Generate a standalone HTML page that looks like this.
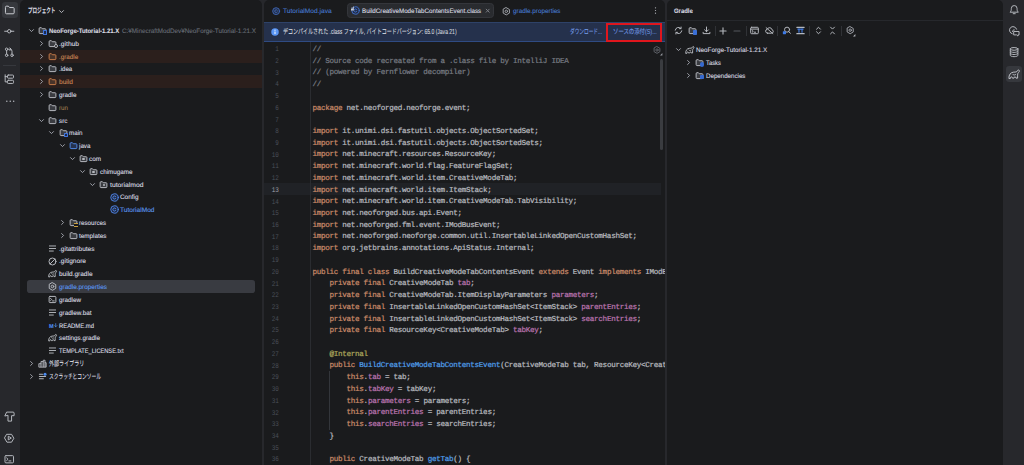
<!DOCTYPE html>
<html lang="ja"><head><meta charset="utf-8"><title>IntelliJ IDEA</title><style>
html,body{margin:0;padding:0;}
body{width:1024px;height:465px;overflow:hidden;background:#27282c;position:relative;font-family:"Liberation Sans",sans-serif;text-rendering:geometricPrecision;}
.b{position:absolute;}
.i{position:absolute;overflow:visible;}
.t{position:absolute;white-space:pre;font-family:"Liberation Sans","Noto Sans CJK JP",sans-serif;transform-origin:0 50%;-webkit-text-stroke-width:0.1px;}
.code,.ln{position:absolute;font-family:"Liberation Mono",monospace;overflow:hidden;-webkit-text-stroke-width:0.22px;}
.ln{-webkit-text-stroke-width:0;}
.ln{text-align:right;}
.cl{height:11.734px;white-space:pre;}
</style></head>
<body>
<div class="b" style="left:1.90px;top:1.90px;width:15.70px;height:15.70px;background:#36383d;border-radius:3.2px;"></div>
<svg class="i" style="left:3.60px;top:3.90px;" width="11.6" height="11.6" viewBox="0 0 16 16"><path fill="none" stroke="#caccd2" stroke-width="1.00" vector-effect="non-scaling-stroke" stroke-linecap="round" stroke-linejoin="round" style="fill:#3b3d42" d="M2 4.3a1.3 1.3 0 0 1 1.3-1.3h2.7l1.7 1.9h5a1.3 1.3 0 0 1 1.3 1.3v6a1.3 1.3 0 0 1-1.3 1.3H3.3a1.3 1.3 0 0 1-1.3-1.3z"/></svg>
<svg class="i" style="left:4.25px;top:25.75px;" width="10.5" height="10.5" viewBox="0 0 16 16"><circle fill="none" stroke="#b4b7bd" stroke-width="1.00" vector-effect="non-scaling-stroke" stroke-linecap="round" stroke-linejoin="round" cx="8" cy="8" r="2.6"/><path fill="none" stroke="#b4b7bd" stroke-width="1.00" vector-effect="non-scaling-stroke" stroke-linecap="round" stroke-linejoin="round" d="M1 8h4.4M10.6 8H15"/></svg>
<svg class="i" style="left:4.25px;top:47.15px;" width="10.5" height="10.5" viewBox="0 0 16 16"><circle fill="none" stroke="#b4b7bd" stroke-width="1.00" vector-effect="non-scaling-stroke" stroke-linecap="round" stroke-linejoin="round" cx="4" cy="12.6" r="1.9"/><circle fill="none" stroke="#b4b7bd" stroke-width="1.00" vector-effect="non-scaling-stroke" stroke-linecap="round" stroke-linejoin="round" cx="12.2" cy="12.6" r="1.9"/><circle fill="none" stroke="#b4b7bd" stroke-width="1.00" vector-effect="non-scaling-stroke" stroke-linecap="round" stroke-linejoin="round" cx="4" cy="3.4" r="1.9"/><path fill="none" stroke="#b4b7bd" stroke-width="1.00" vector-effect="non-scaling-stroke" stroke-linecap="round" stroke-linejoin="round" d="M4 5.3v5.4M12.2 10.7V6.400a3 3 0 0 0-3-3H7.200M9 1.400l2 2-2 2"/></svg>
<div class="b" style="left:3.20px;top:65.20px;width:12.40px;height:0.80px;background:#36383d;border-radius:0px;"></div>
<svg class="i" style="left:4.25px;top:74.25px;" width="10.5" height="10.5" viewBox="0 0 16 16"><rect fill="none" stroke="#b4b7bd" stroke-width="1.00" vector-effect="non-scaling-stroke" stroke-linecap="round" stroke-linejoin="round" x="5.200" y="1.600" width="9.300" height="4.800" rx="1.300"/><rect fill="none" stroke="#b4b7bd" stroke-width="1.00" vector-effect="non-scaling-stroke" stroke-linecap="round" stroke-linejoin="round" x="5.200" y="9.600" width="9.300" height="4.800" rx="1.300"/><path fill="none" stroke="#b4b7bd" stroke-width="1.00" vector-effect="non-scaling-stroke" stroke-linecap="round" stroke-linejoin="round" d="M1.800 1.200V12h3.400M1.800 4h3.400"/></svg>
<svg class="i" style="left:4.55px;top:95.65px;" width="10.5" height="10.5" viewBox="0 0 16 16"><circle fill="#b4b7bd" cx="2.800" cy="8" r="1.15"/><circle fill="#b4b7bd" cx="8" cy="8" r="1.15"/><circle fill="#b4b7bd" cx="13.200" cy="8" r="1.15"/></svg>
<svg class="i" style="left:4.20px;top:410.70px;" width="11" height="11" viewBox="0 0 16 16"><path fill="none" stroke="#b4b7bd" stroke-width="1.00" vector-effect="non-scaling-stroke" stroke-linecap="round" stroke-linejoin="round" d="M1.400 6.800 3.800 1.600H13.200Q14.700 1.600 14.700 3.100V6.800H11V14.700H5.800V6.800Z"/></svg>
<svg class="i" style="left:4.25px;top:432.65px;" width="10.5" height="10.5" viewBox="0 0 16 16"><path fill="none" stroke="#b4b7bd" stroke-width="1.00" vector-effect="non-scaling-stroke" stroke-linecap="round" stroke-linejoin="round" d="M4.500 2h7L15 8l-3.500 6h-7L1 8z"/><path fill="none" stroke="#b4b7bd" stroke-width="1.00" vector-effect="non-scaling-stroke" stroke-linecap="round" stroke-linejoin="round" d="M6.500 5.500v5L10.700 8z"/></svg>
<svg class="i" style="left:4.25px;top:453.65px;" width="10.5" height="10.5" viewBox="0 0 16 16"><rect fill="none" stroke="#b4b7bd" stroke-width="1.00" vector-effect="non-scaling-stroke" stroke-linecap="round" stroke-linejoin="round" x="1.500" y="2.500" width="13" height="11" rx="1.500"/><path fill="none" stroke="#b4b7bd" stroke-width="1.00" vector-effect="non-scaling-stroke" stroke-linecap="round" stroke-linejoin="round" d="M4 6l2.200 2L4 10M7.500 10.500h3"/></svg>
<div class="b" style="left:20px;top:0;width:241.60000000000002px;height:475px;background:#1a1b1d;border-radius:5px 5px 0 0;overflow:hidden">
</div>
<span class="t" style="left:27.50px;top:5.10px;font-size:7.2px;line-height:12px;color:#dadce1;font-weight:bold;transform:scaleX(0.632);">プロジェクト</span>
<svg class="i" style="left:57.70px;top:7.70px;" width="7" height="7" viewBox="0 0 16 16"><path fill="none" stroke="#b4b7bd" stroke-width="1.00" vector-effect="non-scaling-stroke" stroke-linecap="round" stroke-linejoin="round" d="M3.5 6 8 10.5 12.5 6"/></svg>
<div class="b" style="left:20.00px;top:49.72px;width:241.60px;height:12.81px;background:#2b1f1c;border-radius:0px;"></div>
<div class="b" style="left:20.00px;top:75.34px;width:241.60px;height:12.81px;background:#2b1f1c;border-radius:0px;"></div>
<div class="b" style="left:27.30px;top:280.30px;width:227.70px;height:12.81px;background:#393b41;border-radius:2.8px;"></div>
<svg class="i" style="left:27.90px;top:27.00px;" width="7" height="7" viewBox="0 0 16 16"><path fill="none" stroke="#9da0a8" stroke-width="1.00" vector-effect="non-scaling-stroke" stroke-linecap="round" stroke-linejoin="round" d="M3.5 6 8 10.5 12.5 6"/></svg>
<svg class="i" style="left:38.10px;top:26.00px;" width="9" height="9" viewBox="0 0 16 16"><path fill="none" stroke="#b4b7bd" stroke-width="1.00" vector-effect="non-scaling-stroke" stroke-linecap="round" stroke-linejoin="round" style="fill:#3a3c41" d="M2 4.3a1.3 1.3 0 0 1 1.3-1.3h2.7l1.7 1.9h5a1.3 1.3 0 0 1 1.3 1.3v6a1.3 1.3 0 0 1-1.3 1.3H3.3a1.3 1.3 0 0 1-1.3-1.3z"/></svg>
<div class="b" style="left:43.40px;top:30.40px;width:3.8px;height:4.5px;background:#1d2b4a;border:1px solid #3f74dd;border-radius:0.5px;box-sizing:border-box"></div>
<span id="t0" class="t " style="left:48.50px;top:25.90px;font-size:6.5px;color:#dadce1;line-height:12px;font-weight:bold;transform:scaleX(0.9139);">NeoForge-Tutorial-1.21.X</span>
<svg class="i" style="left:38.10px;top:39.81px;" width="7" height="7" viewBox="0 0 16 16"><path fill="none" stroke="#9da0a8" stroke-width="1.00" vector-effect="non-scaling-stroke" stroke-linecap="round" stroke-linejoin="round" d="M6 3.5 10.5 8 6 12.5"/></svg>
<svg class="i" style="left:48.30px;top:38.81px;" width="9" height="9" viewBox="0 0 16 16"><path fill="none" stroke="#b4b7bd" stroke-width="1.00" vector-effect="non-scaling-stroke" stroke-linecap="round" stroke-linejoin="round" style="fill:#3a3c41" d="M2 4.3a1.3 1.3 0 0 1 1.3-1.3h2.7l1.7 1.9h5a1.3 1.3 0 0 1 1.3 1.3v6a1.3 1.3 0 0 1-1.3 1.3H3.3a1.3 1.3 0 0 1-1.3-1.3z"/></svg>
<div class="b" style="left:53.60px;top:43.61px;width:4.2px;height:4.200px;background:#1a1b1d;border:1px solid #b4b7bd;border-radius:2.5px;box-sizing:border-box"></div>
<span id="t1" class="t " style="left:58.70px;top:38.71px;font-size:6.5px;color:#dadce1;line-height:12px;transform:scaleX(1.0240);">.github</span>
<svg class="i" style="left:38.10px;top:52.62px;" width="7" height="7" viewBox="0 0 16 16"><path fill="none" stroke="#9da0a8" stroke-width="1.00" vector-effect="non-scaling-stroke" stroke-linecap="round" stroke-linejoin="round" d="M6 3.5 10.5 8 6 12.5"/></svg>
<svg class="i" style="left:48.30px;top:51.62px;" width="9" height="9" viewBox="0 0 16 16"><path fill="none" stroke="#c57a48" stroke-width="1.00" vector-effect="non-scaling-stroke" stroke-linecap="round" stroke-linejoin="round" style="fill:#48342a" d="M2 4.3a1.3 1.3 0 0 1 1.3-1.3h2.7l1.7 1.9h5a1.3 1.3 0 0 1 1.3 1.3v6a1.3 1.3 0 0 1-1.3 1.3H3.3a1.3 1.3 0 0 1-1.3-1.3z"/></svg>
<span id="t2" class="t " style="left:58.70px;top:51.52px;font-size:6.5px;color:#c98556;line-height:12px;transform:scaleX(0.9660);">.gradle</span>
<svg class="i" style="left:38.10px;top:65.43px;" width="7" height="7" viewBox="0 0 16 16"><path fill="none" stroke="#9da0a8" stroke-width="1.00" vector-effect="non-scaling-stroke" stroke-linecap="round" stroke-linejoin="round" d="M6 3.5 10.5 8 6 12.5"/></svg>
<svg class="i" style="left:48.30px;top:64.43px;" width="9" height="9" viewBox="0 0 16 16"><path fill="none" stroke="#b4b7bd" stroke-width="1.00" vector-effect="non-scaling-stroke" stroke-linecap="round" stroke-linejoin="round" style="fill:#3a3c41" d="M2 4.3a1.3 1.3 0 0 1 1.3-1.3h2.7l1.7 1.9h5a1.3 1.3 0 0 1 1.3 1.3v6a1.3 1.3 0 0 1-1.3 1.3H3.3a1.3 1.3 0 0 1-1.3-1.3z"/></svg>
<span id="t3" class="t " style="left:58.70px;top:64.33px;font-size:6.5px;color:#dadce1;line-height:12px;transform:scaleX(0.9355);">.idea</span>
<svg class="i" style="left:38.10px;top:78.24px;" width="7" height="7" viewBox="0 0 16 16"><path fill="none" stroke="#9da0a8" stroke-width="1.00" vector-effect="non-scaling-stroke" stroke-linecap="round" stroke-linejoin="round" d="M6 3.5 10.5 8 6 12.5"/></svg>
<svg class="i" style="left:48.30px;top:77.24px;" width="9" height="9" viewBox="0 0 16 16"><path fill="none" stroke="#c57a48" stroke-width="1.00" vector-effect="non-scaling-stroke" stroke-linecap="round" stroke-linejoin="round" style="fill:#48342a" d="M2 4.3a1.3 1.3 0 0 1 1.3-1.3h2.7l1.7 1.9h5a1.3 1.3 0 0 1 1.3 1.3v6a1.3 1.3 0 0 1-1.3 1.3H3.3a1.3 1.3 0 0 1-1.3-1.3z"/></svg>
<span id="t4" class="t " style="left:58.70px;top:77.14px;font-size:6.5px;color:#c98556;line-height:12px;transform:scaleX(1.0193);">build</span>
<svg class="i" style="left:38.10px;top:91.05px;" width="7" height="7" viewBox="0 0 16 16"><path fill="none" stroke="#9da0a8" stroke-width="1.00" vector-effect="non-scaling-stroke" stroke-linecap="round" stroke-linejoin="round" d="M6 3.5 10.5 8 6 12.5"/></svg>
<svg class="i" style="left:48.30px;top:90.05px;" width="9" height="9" viewBox="0 0 16 16"><path fill="none" stroke="#b4b7bd" stroke-width="1.00" vector-effect="non-scaling-stroke" stroke-linecap="round" stroke-linejoin="round" style="fill:#3a3c41" d="M2 4.3a1.3 1.3 0 0 1 1.3-1.3h2.7l1.7 1.9h5a1.3 1.3 0 0 1 1.3 1.3v6a1.3 1.3 0 0 1-1.3 1.3H3.3a1.3 1.3 0 0 1-1.3-1.3z"/></svg>
<span id="t5" class="t " style="left:58.70px;top:89.95px;font-size:6.5px;color:#dadce1;line-height:12px;transform:scaleX(0.9680);">gradle</span>
<svg class="i" style="left:48.30px;top:102.86px;" width="9" height="9" viewBox="0 0 16 16"><path fill="none" stroke="#b4b7bd" stroke-width="1.00" vector-effect="non-scaling-stroke" stroke-linecap="round" stroke-linejoin="round" style="fill:#3a3c41" d="M2 4.3a1.3 1.3 0 0 1 1.3-1.3h2.7l1.7 1.9h5a1.3 1.3 0 0 1 1.3 1.3v6a1.3 1.3 0 0 1-1.3 1.3H3.3a1.3 1.3 0 0 1-1.3-1.3z"/></svg>
<span id="t6" class="t " style="left:58.70px;top:102.76px;font-size:6.5px;color:#9c7c4e;line-height:12px;transform:scaleX(0.9568);">run</span>
<svg class="i" style="left:38.10px;top:116.67px;" width="7" height="7" viewBox="0 0 16 16"><path fill="none" stroke="#9da0a8" stroke-width="1.00" vector-effect="non-scaling-stroke" stroke-linecap="round" stroke-linejoin="round" d="M3.5 6 8 10.5 12.5 6"/></svg>
<svg class="i" style="left:48.30px;top:115.67px;" width="9" height="9" viewBox="0 0 16 16"><path fill="none" stroke="#b4b7bd" stroke-width="1.00" vector-effect="non-scaling-stroke" stroke-linecap="round" stroke-linejoin="round" style="fill:#3a3c41" d="M2 4.3a1.3 1.3 0 0 1 1.3-1.3h2.7l1.7 1.9h5a1.3 1.3 0 0 1 1.3 1.3v6a1.3 1.3 0 0 1-1.3 1.3H3.3a1.3 1.3 0 0 1-1.3-1.3z"/></svg>
<span id="t7" class="t " style="left:58.70px;top:115.57px;font-size:6.5px;color:#dadce1;line-height:12px;transform:scaleX(0.9802);">src</span>
<svg class="i" style="left:48.30px;top:129.48px;" width="7" height="7" viewBox="0 0 16 16"><path fill="none" stroke="#9da0a8" stroke-width="1.00" vector-effect="non-scaling-stroke" stroke-linecap="round" stroke-linejoin="round" d="M3.5 6 8 10.5 12.5 6"/></svg>
<svg class="i" style="left:58.50px;top:128.48px;" width="9" height="9" viewBox="0 0 16 16"><path fill="none" stroke="#b4b7bd" stroke-width="1.00" vector-effect="non-scaling-stroke" stroke-linecap="round" stroke-linejoin="round" style="fill:#3a3c41" d="M2 4.3a1.3 1.3 0 0 1 1.3-1.3h2.7l1.7 1.9h5a1.3 1.3 0 0 1 1.3 1.3v6a1.3 1.3 0 0 1-1.3 1.3H3.3a1.3 1.3 0 0 1-1.3-1.3z"/></svg>
<div class="b" style="left:63.80px;top:132.88px;width:3.8px;height:4.5px;background:#1d2b4a;border:1px solid #3f74dd;border-radius:0.5px;box-sizing:border-box"></div>
<span id="t8" class="t " style="left:68.90px;top:128.38px;font-size:6.5px;color:#dadce1;line-height:12px;transform:scaleX(0.9579);">main</span>
<svg class="i" style="left:58.50px;top:142.29px;" width="7" height="7" viewBox="0 0 16 16"><path fill="none" stroke="#9da0a8" stroke-width="1.00" vector-effect="non-scaling-stroke" stroke-linecap="round" stroke-linejoin="round" d="M3.5 6 8 10.5 12.5 6"/></svg>
<svg class="i" style="left:68.70px;top:141.29px;" width="9" height="9" viewBox="0 0 16 16"><path fill="none" stroke="#4f86e0" stroke-width="1.00" vector-effect="non-scaling-stroke" stroke-linecap="round" stroke-linejoin="round" style="fill:#25324d" d="M2 4.3a1.3 1.3 0 0 1 1.3-1.3h2.7l1.7 1.9h5a1.3 1.3 0 0 1 1.3 1.3v6a1.3 1.3 0 0 1-1.3 1.3H3.3a1.3 1.3 0 0 1-1.3-1.3z"/></svg>
<span id="t9" class="t " style="left:79.10px;top:141.19px;font-size:6.5px;color:#dadce1;line-height:12px;transform:scaleX(0.9634);">java</span>
<svg class="i" style="left:68.70px;top:155.10px;" width="7" height="7" viewBox="0 0 16 16"><path fill="none" stroke="#9da0a8" stroke-width="1.00" vector-effect="non-scaling-stroke" stroke-linecap="round" stroke-linejoin="round" d="M3.5 6 8 10.5 12.5 6"/></svg>
<svg class="i" style="left:78.90px;top:154.10px;" width="9" height="9" viewBox="0 0 16 16"><path fill="none" stroke="#b4b7bd" stroke-width="1.00" vector-effect="non-scaling-stroke" stroke-linecap="round" stroke-linejoin="round" style="fill:#3a3c41" d="M2 4.3a1.3 1.3 0 0 1 1.3-1.3h2.7l1.7 1.9h5a1.3 1.3 0 0 1 1.3 1.3v6a1.3 1.3 0 0 1-1.3 1.3H3.3a1.3 1.3 0 0 1-1.3-1.3z"/></svg>
<div class="b" style="left:82.20px;top:158.00px;width:2.400px;height:2.400px;background:#b4b7bd;border-radius:1.2px"></div>
<span id="t10" class="t " style="left:89.30px;top:154.00px;font-size:6.5px;color:#dadce1;line-height:12px;transform:scaleX(0.9771);">com</span>
<svg class="i" style="left:78.90px;top:167.91px;" width="7" height="7" viewBox="0 0 16 16"><path fill="none" stroke="#9da0a8" stroke-width="1.00" vector-effect="non-scaling-stroke" stroke-linecap="round" stroke-linejoin="round" d="M3.5 6 8 10.5 12.5 6"/></svg>
<svg class="i" style="left:89.10px;top:166.91px;" width="9" height="9" viewBox="0 0 16 16"><path fill="none" stroke="#b4b7bd" stroke-width="1.00" vector-effect="non-scaling-stroke" stroke-linecap="round" stroke-linejoin="round" style="fill:#3a3c41" d="M2 4.3a1.3 1.3 0 0 1 1.3-1.3h2.7l1.7 1.9h5a1.3 1.3 0 0 1 1.3 1.3v6a1.3 1.3 0 0 1-1.3 1.3H3.3a1.3 1.3 0 0 1-1.3-1.3z"/></svg>
<div class="b" style="left:92.40px;top:170.81px;width:2.400px;height:2.400px;background:#b4b7bd;border-radius:1.2px"></div>
<span id="t11" class="t " style="left:99.50px;top:166.81px;font-size:6.5px;color:#dadce1;line-height:12px;transform:scaleX(0.9670);">chimugame</span>
<svg class="i" style="left:89.10px;top:180.72px;" width="7" height="7" viewBox="0 0 16 16"><path fill="none" stroke="#9da0a8" stroke-width="1.00" vector-effect="non-scaling-stroke" stroke-linecap="round" stroke-linejoin="round" d="M3.5 6 8 10.5 12.5 6"/></svg>
<svg class="i" style="left:99.30px;top:179.72px;" width="9" height="9" viewBox="0 0 16 16"><path fill="none" stroke="#b4b7bd" stroke-width="1.00" vector-effect="non-scaling-stroke" stroke-linecap="round" stroke-linejoin="round" style="fill:#3a3c41" d="M2 4.3a1.3 1.3 0 0 1 1.3-1.3h2.7l1.7 1.9h5a1.3 1.3 0 0 1 1.3 1.3v6a1.3 1.3 0 0 1-1.3 1.3H3.3a1.3 1.3 0 0 1-1.3-1.3z"/></svg>
<div class="b" style="left:102.60px;top:183.62px;width:2.400px;height:2.400px;background:#b4b7bd;border-radius:1.2px"></div>
<span id="t12" class="t " style="left:109.70px;top:179.62px;font-size:6.5px;color:#dadce1;line-height:12px;transform:scaleX(1.0418);">tutorialmod</span>
<svg class="i" style="left:109.50px;top:192.53px;" width="9" height="9" viewBox="0 0 16 16"><circle fill="none" stroke="#4f86ea" stroke-width="0.90" vector-effect="non-scaling-stroke" stroke-linecap="round" stroke-linejoin="round" cx="8" cy="8" r="6.700" style="fill:#232f49"/><path fill="none" stroke="#4f86ea" stroke-width="0.90" vector-effect="non-scaling-stroke" stroke-linecap="round" stroke-linejoin="round" d="M10.100 6.300A2.700 2.700 0 1 0 10.100 9.700"/></svg>
<span id="t13" class="t " style="left:119.90px;top:192.43px;font-size:6.5px;color:#dadce1;line-height:12px;transform:scaleX(0.9842);">Config</span>
<svg class="i" style="left:109.50px;top:205.34px;" width="9" height="9" viewBox="0 0 16 16"><circle fill="none" stroke="#4f86ea" stroke-width="0.90" vector-effect="non-scaling-stroke" stroke-linecap="round" stroke-linejoin="round" cx="8" cy="8" r="6.700" style="fill:#232f49"/><path fill="none" stroke="#4f86ea" stroke-width="0.90" vector-effect="non-scaling-stroke" stroke-linecap="round" stroke-linejoin="round" d="M10.100 6.300A2.700 2.700 0 1 0 10.100 9.700"/></svg>
<span id="t14" class="t " style="left:119.90px;top:205.24px;font-size:6.5px;color:#5c97ee;line-height:12px;transform:scaleX(1.0124);">TutorialMod</span>
<svg class="i" style="left:58.50px;top:219.15px;" width="7" height="7" viewBox="0 0 16 16"><path fill="none" stroke="#9da0a8" stroke-width="1.00" vector-effect="non-scaling-stroke" stroke-linecap="round" stroke-linejoin="round" d="M6 3.5 10.5 8 6 12.5"/></svg>
<svg class="i" style="left:68.70px;top:218.15px;" width="9" height="9" viewBox="0 0 16 16"><path fill="none" stroke="#b4b7bd" stroke-width="1.00" vector-effect="non-scaling-stroke" stroke-linecap="round" stroke-linejoin="round" style="fill:#3a3c41" d="M2 4.3a1.3 1.3 0 0 1 1.3-1.3h2.7l1.7 1.9h5a1.3 1.3 0 0 1 1.3 1.3v6a1.3 1.3 0 0 1-1.3 1.3H3.3a1.3 1.3 0 0 1-1.3-1.3z"/></svg>
<div class="b" style="left:73.70px;top:223.15px;width:4.500px;height:3.5px;background:#1a1b1d;border-top:1px solid #c9a040;border-bottom:1px solid #c9a040;box-sizing:border-box"></div>
<span id="t15" class="t " style="left:79.10px;top:218.05px;font-size:6.5px;color:#dadce1;line-height:12px;transform:scaleX(0.9458);">resources</span>
<svg class="i" style="left:58.50px;top:231.96px;" width="7" height="7" viewBox="0 0 16 16"><path fill="none" stroke="#9da0a8" stroke-width="1.00" vector-effect="non-scaling-stroke" stroke-linecap="round" stroke-linejoin="round" d="M6 3.5 10.5 8 6 12.5"/></svg>
<svg class="i" style="left:68.70px;top:230.96px;" width="9" height="9" viewBox="0 0 16 16"><path fill="none" stroke="#b4b7bd" stroke-width="1.00" vector-effect="non-scaling-stroke" stroke-linecap="round" stroke-linejoin="round" style="fill:#3a3c41" d="M2 4.3a1.3 1.3 0 0 1 1.3-1.3h2.7l1.7 1.9h5a1.3 1.3 0 0 1 1.3 1.3v6a1.3 1.3 0 0 1-1.3 1.3H3.3a1.3 1.3 0 0 1-1.3-1.3z"/></svg>
<span id="t16" class="t " style="left:79.10px;top:230.86px;font-size:6.5px;color:#dadce1;line-height:12px;transform:scaleX(0.9756);">templates</span>
<svg class="i" style="left:48.30px;top:243.77px;" width="9" height="9" viewBox="0 0 16 16"><path fill="none" stroke="#b4b7bd" stroke-width="0.95" vector-effect="non-scaling-stroke" stroke-linecap="round" stroke-linejoin="round" d="M2.500 3.500h11M2.500 8h11M2.500 12.500h7"/></svg>
<span id="t17" class="t " style="left:58.70px;top:243.67px;font-size:6.5px;color:#dadce1;line-height:12px;transform:scaleX(1.0022);">.gitattributes</span>
<svg class="i" style="left:48.30px;top:256.58px;" width="9" height="9" viewBox="0 0 16 16"><circle fill="none" stroke="#b4b7bd" stroke-width="1.00" vector-effect="non-scaling-stroke" stroke-linecap="round" stroke-linejoin="round" cx="8" cy="8" r="6.200"/><path fill="none" stroke="#b4b7bd" stroke-width="1.00" vector-effect="non-scaling-stroke" stroke-linecap="round" stroke-linejoin="round" d="M3.700 12.300 12.300 3.700"/></svg>
<span id="t18" class="t " style="left:58.70px;top:256.48px;font-size:6.5px;color:#dadce1;line-height:12px;transform:scaleX(1.0093);">.gitignore</span>
<svg class="i" style="left:48.30px;top:269.39px;" width="9" height="9" viewBox="0 0 16 16"><path fill="none" stroke="#b4b7bd" stroke-width="0.95" vector-effect="non-scaling-stroke" stroke-linecap="round" stroke-linejoin="round" d="M1.200 13.500C1 9 3.500 6 7 5.600L10.500 5.300C11.500 5.200 12.200 4.700 12.500 3.700C12.900 2.400 14.600 2.200 15 3.400C15.400 4.600 14.700 5.600 13.900 6.200C13.100 6.800 12.800 8 12.800 9.500V13.500H10.700C10.700 12.400 10.100 11.800 9.300 11.800S7.900 12.400 7.900 13.500H5.900C5.900 12.400 5.300 11.800 4.500 11.800S3.100 12.400 3.100 13.500Z"/><path fill="none" stroke="#b4b7bd" stroke-width="0.80" vector-effect="non-scaling-stroke" stroke-linecap="round" stroke-linejoin="round" d="M6.200 8.300C7.200 9.700 9 9.800 10.200 8.700"/></svg>
<span id="t19" class="t " style="left:58.70px;top:269.29px;font-size:6.5px;color:#dadce1;line-height:12px;transform:scaleX(0.9967);">build.gradle</span>
<svg class="i" style="left:48.30px;top:282.20px;" width="9" height="9" viewBox="0 0 16 16"><path fill="none" stroke="#b4b7bd" stroke-width="1.00" vector-effect="non-scaling-stroke" stroke-linecap="round" stroke-linejoin="round" d="M8 1.300 13.800 4.650v6.700L8 14.700 2.200 11.350V4.650z"/><circle fill="none" stroke="#b4b7bd" stroke-width="1.00" vector-effect="non-scaling-stroke" stroke-linecap="round" stroke-linejoin="round" cx="8" cy="8" r="2.300"/></svg>
<span id="t20" class="t " style="left:58.70px;top:282.10px;font-size:6.5px;color:#5c97ee;line-height:12px;transform:scaleX(0.9840);">gradle.properties</span>
<svg class="i" style="left:48.30px;top:295.01px;" width="9" height="9" viewBox="0 0 16 16"><rect fill="none" stroke="#b4b7bd" stroke-width="1.00" vector-effect="non-scaling-stroke" stroke-linecap="round" stroke-linejoin="round" x="2" y="2.500" width="12" height="11" rx="1.500"/><path fill="none" stroke="#b4b7bd" stroke-width="1.00" vector-effect="non-scaling-stroke" stroke-linecap="round" stroke-linejoin="round" d="M4.500 6l2 2-2 2M8 10.500h3"/></svg>
<span id="t21" class="t " style="left:58.70px;top:294.91px;font-size:6.5px;color:#dadce1;line-height:12px;transform:scaleX(0.9664);">gradlew</span>
<svg class="i" style="left:48.30px;top:307.82px;" width="9" height="9" viewBox="0 0 16 16"><path fill="none" stroke="#b4b7bd" stroke-width="0.95" vector-effect="non-scaling-stroke" stroke-linecap="round" stroke-linejoin="round" d="M2.500 3.500h11M2.500 8h11M2.500 12.500h7"/></svg>
<span id="t22" class="t " style="left:58.70px;top:307.72px;font-size:6.5px;color:#dadce1;line-height:12px;transform:scaleX(0.9774);">gradlew.bat</span>
<span class="t" style="left:49.00px;top:320.53px;font-size:5.6px;font-weight:bold;color:#4d8df0;line-height:12px;-webkit-text-stroke-width:0.1px">M</span>
<svg class="i" style="left:54.00px;top:322.83px" width="3.4" height="4.6" viewBox="0 0 8 10"><path fill="none" stroke="#4d8df0" stroke-width="1.700" stroke-linecap="round" stroke-linejoin="round" d="M4 1v7.500M1.200 5.800 4 8.600l2.800-2.800"/></svg>
<span id="t23" class="t " style="left:58.70px;top:320.53px;font-size:6.5px;color:#dadce1;line-height:12px;transform:scaleX(0.9054);">README.md</span>
<svg class="i" style="left:48.30px;top:333.44px;" width="9" height="9" viewBox="0 0 16 16"><path fill="none" stroke="#b4b7bd" stroke-width="0.95" vector-effect="non-scaling-stroke" stroke-linecap="round" stroke-linejoin="round" d="M1.200 13.500C1 9 3.500 6 7 5.600L10.500 5.300C11.500 5.200 12.200 4.700 12.500 3.700C12.900 2.400 14.600 2.200 15 3.400C15.400 4.600 14.700 5.600 13.900 6.200C13.100 6.800 12.800 8 12.800 9.500V13.500H10.700C10.700 12.400 10.100 11.800 9.300 11.800S7.900 12.400 7.900 13.500H5.900C5.900 12.400 5.300 11.800 4.500 11.800S3.100 12.400 3.100 13.500Z"/><path fill="none" stroke="#b4b7bd" stroke-width="0.80" vector-effect="non-scaling-stroke" stroke-linecap="round" stroke-linejoin="round" d="M6.200 8.300C7.200 9.700 9 9.800 10.200 8.700"/></svg>
<span id="t24" class="t " style="left:58.70px;top:333.34px;font-size:6.5px;color:#dadce1;line-height:12px;transform:scaleX(0.9697);">settings.gradle</span>
<svg class="i" style="left:48.30px;top:346.25px;" width="9" height="9" viewBox="0 0 16 16"><path fill="none" stroke="#b4b7bd" stroke-width="0.95" vector-effect="non-scaling-stroke" stroke-linecap="round" stroke-linejoin="round" d="M2.500 3.500h11M2.500 8h11M2.500 12.500h7"/></svg>
<span id="t25" class="t " style="left:58.70px;top:346.15px;font-size:6.5px;color:#dadce1;line-height:12px;transform:scaleX(0.8724);">TEMPLATE_LICENSE.txt</span>
<svg class="i" style="left:27.90px;top:360.06px;" width="7" height="7" viewBox="0 0 16 16"><path fill="none" stroke="#9da0a8" stroke-width="1.00" vector-effect="non-scaling-stroke" stroke-linecap="round" stroke-linejoin="round" d="M6 3.5 10.5 8 6 12.5"/></svg>
<svg class="i" style="left:38.10px;top:359.06px;" width="9" height="9" viewBox="0 0 16 16"><path fill="none" stroke="#b4b7bd" stroke-width="0.90" vector-effect="non-scaling-stroke" stroke-linecap="round" stroke-linejoin="round" style="fill:#3a3c41" d="M1.500 13.800V8.300h3.800V4.500h4V2.200h3.200v4.300h2v7.300zM5.300 8.300v5.500M9.300 4.500v9.300M12.500 6.500v7.300"/></svg>
<span class="t" style="left:48.50px;top:357.86px;font-size:7.2px;line-height:12px;color:#dadce1;transform:scaleX(0.704);">外部ライブラリ</span>
<svg class="i" style="left:27.90px;top:372.87px;" width="7" height="7" viewBox="0 0 16 16"><path fill="none" stroke="#9da0a8" stroke-width="1.00" vector-effect="non-scaling-stroke" stroke-linecap="round" stroke-linejoin="round" d="M6 3.5 10.5 8 6 12.5"/></svg>
<svg class="i" style="left:38.10px;top:371.87px;" width="9" height="9" viewBox="0 0 16 16"><path fill="none" stroke="#b4b7bd" stroke-width="1.10" vector-effect="non-scaling-stroke" stroke-linecap="round" stroke-linejoin="round" d="M2.500 4h5.500M2.500 8h11M2.500 12h7"/><circle fill="#4d8df0" cx="12.500" cy="4" r="2.700"/></svg>
<span class="t" style="left:48.50px;top:370.67px;font-size:7.2px;line-height:12px;color:#dadce1;transform:scaleX(0.657);">スクラッチとコンソール</span>
<span id="t26" class="t " style="left:122.00px;top:25.90px;font-size:6.4px;color:#676c76;line-height:12px;transform:scaleX(0.9867);">C:¥MinecraftModDev¥NeoForge-Tutorial-1.21.X</span>
<div class="b" style="left:264.4px;top:0;width:400.4px;height:475px;background:#1a1b1d;border-radius:5px 5px 0 0"></div>
<svg class="i" style="left:271.75px;top:6.65px;" width="8.3" height="8.3" viewBox="0 0 16 16"><circle fill="none" stroke="#3f68b8" stroke-width="0.90" vector-effect="non-scaling-stroke" stroke-linecap="round" stroke-linejoin="round" cx="8" cy="8" r="6.700" style="fill:#232f49"/><path fill="none" stroke="#3f68b8" stroke-width="0.90" vector-effect="non-scaling-stroke" stroke-linecap="round" stroke-linejoin="round" d="M10.100 6.300A2.700 2.700 0 1 0 10.100 9.700"/></svg>
<span id="t27" class="t " style="left:282.60px;top:6.00px;font-size:6.5px;color:#4678cc;line-height:12px;transform:scaleX(1.0186);">TutorialMod.java</span>
<div class="b" style="left:347.00px;top:3.20px;width:146.90px;height:15.10px;background:#292b2f;border-radius:3.5px;border:1px solid #34363b;box-sizing:border-box;"></div>
<svg class="i" style="left:350.50px;top:6.10px;" width="9" height="9" viewBox="0 0 16 16"><circle fill="none" stroke="#3f6fd0" stroke-width="0.90" vector-effect="non-scaling-stroke" stroke-linecap="round" stroke-linejoin="round" cx="8" cy="8" r="6.700" style="fill:#232f49"/><path fill="none" stroke="#3f6fd0" stroke-width="0.90" vector-effect="non-scaling-stroke" stroke-linecap="round" stroke-linejoin="round" d="M10.100 6.300A2.700 2.700 0 1 0 10.100 9.700"/></svg>
<svg class="i" style="left:349.8px;top:5.6px" width="5" height="5" viewBox="0 0 10 10"><path fill="#c9ccd2" d="M2 9V5.500h1.300V2.500h1.500v3h1.400V1h1.500v8z"/></svg>
<span id="t28" class="t " style="left:362.20px;top:6.00px;font-size:6.5px;color:#dadce1;line-height:12px;transform:scaleX(0.9562);">BuildCreativeModeTabContentsEvent.class</span>
<svg class="i" style="left:484.70px;top:8.10px;" width="5.4" height="5.4" viewBox="0 0 16 16"><path fill="none" stroke="#777a81" stroke-width="1.00" vector-effect="non-scaling-stroke" stroke-linecap="round" stroke-linejoin="round" d="M3.500 3.500l9 9M12.500 3.500l-9 9"/></svg>
<svg class="i" style="left:501.50px;top:6.50px;" width="8.6" height="8.6" viewBox="0 0 16 16"><path fill="none" stroke="#9da0a7" stroke-width="1.00" vector-effect="non-scaling-stroke" stroke-linecap="round" stroke-linejoin="round" d="M8 1.300 13.800 4.650v6.700L8 14.700 2.200 11.350V4.650z"/><circle fill="none" stroke="#9da0a7" stroke-width="1.00" vector-effect="non-scaling-stroke" stroke-linecap="round" stroke-linejoin="round" cx="8" cy="8" r="2.300"/></svg>
<span id="t29" class="t " style="left:512.80px;top:6.00px;font-size:6.5px;color:#4678cc;line-height:12px;transform:scaleX(0.9737);">gradle.properties</span>
<svg class="i" style="left:651.10px;top:6.00px;" width="9" height="9" viewBox="0 0 16 16"><circle fill="#b4b7bd" cx="8" cy="3.200" r="1.1"/><circle fill="#b4b7bd" cx="8" cy="8" r="1.1"/><circle fill="#b4b7bd" cx="8" cy="12.800" r="1.1"/></svg>
<div class="b" style="left:264.40px;top:21.50px;width:400.40px;height:20.60px;background:#25314c;border-radius:0px;border-bottom:1px solid #2f4b83;border-top:1px solid #2e4268;box-sizing:border-box;"></div>
<svg class="i" style="left:270.80px;top:28.00px;" width="8" height="8" viewBox="0 0 16 16"><circle fill="#5a96f5" cx="8" cy="8" r="7.500"/><rect fill="#fff" x="7" y="6.800" width="2" height="5.200" rx=".5"/><circle fill="#fff" cx="8" cy="4.400" r="1.200"/></svg>
<span class="t" style="left:283.20px;top:26.00px;font-size:7.2px;line-height:12px;color:#d3d7df;transform:scaleX(0.698);">デコンパイルされた .class ファイル, バイトコードバージョン: 65.0 (Java 21)</span>
<span class="t" style="left:570.20px;top:26.00px;font-size:7.2px;line-height:12px;color:#7197e0;transform:scaleX(0.65);">ダウンロード...</span>
<span class="t" style="left:613.20px;top:26.00px;font-size:7.2px;line-height:12px;color:#7197e0;transform:scaleX(0.748);">ソースの添付(S)...</span>
<div class="b" style="left:605.7px;top:22.6px;width:56.3px;height:19.1px;border:2px solid #e0161d;box-sizing:border-box"></div>
<div class="b" style="left:264.40px;top:183.44px;width:396.60px;height:11.43px;background:#202226;border-radius:0px;"></div>
<div class="b" style="left:310.20px;top:42.10px;width:0.80px;height:430.00px;background:#2a2c30;border-radius:0px;"></div>
<div class="b" style="left:328.60px;top:371.49px;width:0.70px;height:58.67px;background:#33363b;border-radius:0px;"></div>
<div class="code" style="left:312.4px;top:44.983px;width:352.40px;font-size:7.600px;line-height:11.734px;letter-spacing:-0.2893px"><div class="cl"><span style="color:#767a81">//</span></div><div class="cl"><span style="color:#767a81">// Source code recreated from a .class file by IntelliJ IDEA</span></div><div class="cl"><span style="color:#767a81">// (powered by Fernflower decompiler)</span></div><div class="cl"><span style="color:#767a81">//</span></div><div class="cl">&nbsp;</div><div class="cl"><span style="color:#c98a69">package</span><span style="color:#b6b8be"> net.neoforged.neoforge.event;</span></div><div class="cl">&nbsp;</div><div class="cl"><span style="color:#c98a69">import</span><span style="color:#b6b8be"> it.unimi.dsi.fastutil.objects.ObjectSortedSet;</span></div><div class="cl"><span style="color:#c98a69">import</span><span style="color:#b6b8be"> it.unimi.dsi.fastutil.objects.ObjectSortedSets;</span></div><div class="cl"><span style="color:#c98a69">import</span><span style="color:#b6b8be"> net.minecraft.resources.ResourceKey;</span></div><div class="cl"><span style="color:#c98a69">import</span><span style="color:#b6b8be"> net.minecraft.world.flag.FeatureFlagSet;</span></div><div class="cl"><span style="color:#c98a69">import</span><span style="color:#b6b8be"> net.minecraft.world.item.CreativeModeTab;</span></div><div class="cl"><span style="color:#c98a69">import</span><span style="color:#b6b8be"> net.minecraft.world.item.ItemStack;</span></div><div class="cl"><span style="color:#c98a69">import</span><span style="color:#b6b8be"> net.minecraft.world.item.CreativeModeTab.TabVisibility;</span></div><div class="cl"><span style="color:#c98a69">import</span><span style="color:#b6b8be"> net.neoforged.bus.api.Event;</span></div><div class="cl"><span style="color:#c98a69">import</span><span style="color:#b6b8be"> net.neoforged.fml.event.IModBusEvent;</span></div><div class="cl"><span style="color:#c98a69">import</span><span style="color:#b6b8be"> net.neoforged.neoforge.common.util.InsertableLinkedOpenCustomHashSet;</span></div><div class="cl"><span style="color:#c98a69">import</span><span style="color:#b6b8be"> org.jetbrains.annotations.ApiStatus.Internal;</span></div><div class="cl">&nbsp;</div><div class="cl"><span style="color:#c98a69">public final class</span><span style="color:#b6b8be"> BuildCreativeModeTabContentsEvent </span><span style="color:#c98a69">extends</span><span style="color:#b6b8be"> Event </span><span style="color:#c98a69">implements</span><span style="color:#b6b8be"> IModBusEvent {</span></div><div class="cl"><span style="color:#c98a69">    private final</span><span style="color:#b6b8be"> CreativeModeTab </span><span style="color:#ba74af">tab</span><span style="color:#b6b8be">;</span></div><div class="cl"><span style="color:#c98a69">    private final</span><span style="color:#b6b8be"> CreativeModeTab.ItemDisplayParameters </span><span style="color:#ba74af">parameters</span><span style="color:#b6b8be">;</span></div><div class="cl"><span style="color:#c98a69">    private final</span><span style="color:#b6b8be"> InsertableLinkedOpenCustomHashSet&lt;ItemStack&gt; </span><span style="color:#ba74af">parentEntries</span><span style="color:#b6b8be">;</span></div><div class="cl"><span style="color:#c98a69">    private final</span><span style="color:#b6b8be"> InsertableLinkedOpenCustomHashSet&lt;ItemStack&gt; </span><span style="color:#ba74af">searchEntries</span><span style="color:#b6b8be">;</span></div><div class="cl"><span style="color:#c98a69">    private final</span><span style="color:#b6b8be"> ResourceKey&lt;CreativeModeTab&gt; </span><span style="color:#ba74af">tabKey</span><span style="color:#b6b8be">;</span></div><div class="cl">&nbsp;</div><div class="cl"><span style="color:#aca75c">    @Internal</span></div><div class="cl"><span style="color:#c98a69">    public</span><span style="color:#509eea"> BuildCreativeModeTabContentsEvent</span><span style="color:#b6b8be">(CreativeModeTab tab, ResourceKey&lt;CreativeModeTab&gt; tabKey, FeatureFlagSet flags) {</span></div><div class="cl"><span style="color:#c98a69">        this</span><span style="color:#b6b8be">.</span><span style="color:#ba74af">tab</span><span style="color:#b6b8be"> = tab;</span></div><div class="cl"><span style="color:#c98a69">        this</span><span style="color:#b6b8be">.</span><span style="color:#ba74af">tabKey</span><span style="color:#b6b8be"> = tabKey;</span></div><div class="cl"><span style="color:#c98a69">        this</span><span style="color:#b6b8be">.</span><span style="color:#ba74af">parameters</span><span style="color:#b6b8be"> = parameters;</span></div><div class="cl"><span style="color:#c98a69">        this</span><span style="color:#b6b8be">.</span><span style="color:#ba74af">parentEntries</span><span style="color:#b6b8be"> = parentEntries;</span></div><div class="cl"><span style="color:#c98a69">        this</span><span style="color:#b6b8be">.</span><span style="color:#ba74af">searchEntries</span><span style="color:#b6b8be"> = searchEntries;</span></div><div class="cl"><span style="color:#b6b8be">    }</span></div><div class="cl">&nbsp;</div><div class="cl"><span style="color:#c98a69">    public</span><span style="color:#b6b8be"> CreativeModeTab </span><span style="color:#509eea">getTab</span><span style="color:#b6b8be">() {</span></div></div>
<div class="ln" style="left:264.4px;top:45.233px;width:14.90px;font-size:7.3px;line-height:11.734px;transform:scaleX(0.8105);transform-origin:100% 0"><div class="cl" style="color:#4b5059">1</div><div class="cl" style="color:#4b5059">2</div><div class="cl" style="color:#4b5059">3</div><div class="cl" style="color:#4b5059">4</div><div class="cl" style="color:#4b5059">5</div><div class="cl" style="color:#4b5059">6</div><div class="cl" style="color:#4b5059">7</div><div class="cl" style="color:#4b5059">8</div><div class="cl" style="color:#4b5059">9</div><div class="cl" style="color:#4b5059">10</div><div class="cl" style="color:#4b5059">11</div><div class="cl" style="color:#4b5059">12</div><div class="cl" style="color:#a1a3ab">13</div><div class="cl" style="color:#4b5059">14</div><div class="cl" style="color:#4b5059">15</div><div class="cl" style="color:#4b5059">16</div><div class="cl" style="color:#4b5059">17</div><div class="cl" style="color:#4b5059">18</div><div class="cl" style="color:#4b5059">19</div><div class="cl" style="color:#4b5059">20</div><div class="cl" style="color:#4b5059">21</div><div class="cl" style="color:#4b5059">22</div><div class="cl" style="color:#4b5059">23</div><div class="cl" style="color:#4b5059">24</div><div class="cl" style="color:#4b5059">25</div><div class="cl" style="color:#4b5059">26</div><div class="cl" style="color:#4b5059">27</div><div class="cl" style="color:#4b5059">28</div><div class="cl" style="color:#4b5059">29</div><div class="cl" style="color:#4b5059">30</div><div class="cl" style="color:#4b5059">31</div><div class="cl" style="color:#4b5059">32</div><div class="cl" style="color:#4b5059">33</div><div class="cl" style="color:#4b5059">34</div><div class="cl" style="color:#4b5059">35</div><div class="cl" style="color:#4b5059">36</div></div>
<svg class="i" style="left:652.90px;top:46.00px;" width="8" height="8" viewBox="0 0 16 16"><path fill="none" stroke="#5d6067" stroke-width="1.00" vector-effect="non-scaling-stroke" stroke-linecap="round" stroke-linejoin="round" d="M8 1.300 13.800 4.650v6.700L8 14.700 2.200 11.350V4.650z"/><circle fill="none" stroke="#5d6067" stroke-width="1.00" vector-effect="non-scaling-stroke" stroke-linecap="round" stroke-linejoin="round" cx="8" cy="8" r="2.300"/></svg>
<svg class="i" style="left:659.6px;top:52.6px" width="2.4" height="2.4" viewBox="0 0 4 4"><path fill="#9a9da4" d="M4 0v4H0z"/></svg>
<div class="b" style="left:659.90px;top:59.00px;width:3.50px;height:91.00px;background:#3a3c40;border-radius:1.75px;"></div>
<div class="b" style="left:667.4px;top:0;width:335.70000000000005px;height:475px;background:#1a1b1d;border-radius:5px 5px 0 0"></div>
<span id="t30" class="t " style="left:673.80px;top:5.90px;font-size:6.5px;color:#dadce1;line-height:12px;font-weight:bold;transform:scaleX(0.9129);">Gradle</span>
<div class="b" style="left:667.40px;top:20.20px;width:335.70px;height:0.90px;background:#26282c;border-radius:0px;"></div>
<div class="b" style="left:714.70px;top:25.90px;width:0.80px;height:9.80px;background:#303236;border-radius:0px;"></div>
<div class="b" style="left:746.00px;top:25.90px;width:0.80px;height:9.80px;background:#303236;border-radius:0px;"></div>
<div class="b" style="left:777.30px;top:25.90px;width:0.80px;height:9.80px;background:#303236;border-radius:0px;"></div>
<div class="b" style="left:809.30px;top:25.90px;width:0.80px;height:9.80px;background:#303236;border-radius:0px;"></div>
<div class="b" style="left:840.90px;top:25.90px;width:0.80px;height:9.80px;background:#303236;border-radius:0px;"></div>
<svg class="i" style="left:674.00px;top:26.10px;" width="9" height="9" viewBox="0 0 16 16"><path fill="none" stroke="#b4b7bd" stroke-width="1.00" vector-effect="non-scaling-stroke" stroke-linecap="round" stroke-linejoin="round" d="M13.800 8.600a5.800 5.800 0 0 1-10 3M2.200 7.400a5.800 5.800 0 0 1 10-3"/><path fill="none" stroke="#b4b7bd" stroke-width="1.00" vector-effect="non-scaling-stroke" stroke-linecap="round" stroke-linejoin="round" d="M12.600 1.800v2.900H9.700M3.400 14.200v-2.900h2.900"/></svg>
<svg class="i" style="left:687.80px;top:26.10px;" width="9" height="9" viewBox="0 0 16 16"><path fill="none" stroke="#b4b7bd" stroke-width="1.00" vector-effect="non-scaling-stroke" stroke-linecap="round" stroke-linejoin="round" style="fill:#3a3c41" d="M2 4.3a1.3 1.3 0 0 1 1.3-1.3h2.7l1.7 1.9h5a1.3 1.3 0 0 1 1.3 1.3v6a1.3 1.3 0 0 1-1.3 1.3H3.3a1.3 1.3 0 0 1-1.3-1.3z"/></svg>
<div class="b" style="left:692.60px;top:30.40px;width:4.8px;height:4.800px;background:#3a6fd6;border-radius:0.8px"></div>
<svg class="i" style="left:701.70px;top:26.10px;" width="9" height="9" viewBox="0 0 16 16"><path fill="none" stroke="#b4b7bd" stroke-width="1.00" vector-effect="non-scaling-stroke" stroke-linecap="round" stroke-linejoin="round" d="M8 1.800v8.200M4.600 6.800 8 10.200l3.400-3.400M2 11.200v2.300h12v-2.300"/></svg>
<svg class="i" style="left:719.30px;top:26.60px;" width="8" height="8" viewBox="0 0 16 16"><path fill="none" stroke="#b4b7bd" stroke-width="1.10" vector-effect="non-scaling-stroke" stroke-linecap="round" stroke-linejoin="round" d="M8 1.800v12.400M1.800 8h12.400"/></svg>
<svg class="i" style="left:733.10px;top:26.60px;" width="8" height="8" viewBox="0 0 16 16"><path fill="none" stroke="#55585e" stroke-width="1.10" vector-effect="non-scaling-stroke" stroke-linecap="round" stroke-linejoin="round" d="M2 8h12"/></svg>
<svg class="i" style="left:750.40px;top:26.10px;" width="9" height="9" viewBox="0 0 16 16"><rect fill="none" stroke="#b4b7bd" stroke-width="1.00" vector-effect="non-scaling-stroke" stroke-linecap="round" stroke-linejoin="round" x="1.200" y="2.300" width="13.600" height="11.400" rx="1.600"/><path fill="none" stroke="#b4b7bd" stroke-width="1.00" vector-effect="non-scaling-stroke" stroke-linecap="round" stroke-linejoin="round" d="M1.200 5.500h13.600"/><path fill="none" stroke="#b4b7bd" stroke-width="1.00" vector-effect="non-scaling-stroke" stroke-linecap="round" stroke-linejoin="round" d="M4 8.200l1.800 1.400L4 11M7.500 11h2.500"/></svg>
<svg class="i" style="left:764.60px;top:26.10px;" width="9" height="9" viewBox="0 0 16 16"><path fill="none" stroke="#b4b7bd" stroke-width="1.00" vector-effect="non-scaling-stroke" stroke-linecap="round" stroke-linejoin="round" d="M4.300 12.800h7.500a3.100 3.100 0 0 0 .6-6.100 4.400 4.400 0 0 0-8.400-1A3.600 3.600 0 0 0 4.300 12.800z"/><path fill="none" stroke="#b4b7bd" stroke-width="1.00" vector-effect="non-scaling-stroke" stroke-linecap="round" stroke-linejoin="round" d="M2 3l12 10.500"/></svg>
<svg class="i" style="left:781.70px;top:26.10px;" width="9" height="9" viewBox="0 0 16 16"><circle fill="none" stroke="#b4b7bd" stroke-width="1.00" vector-effect="non-scaling-stroke" stroke-linecap="round" stroke-linejoin="round" cx="9" cy="6.500" r="4.500"/><path fill="none" stroke="#b4b7bd" stroke-width="1.00" vector-effect="non-scaling-stroke" stroke-linecap="round" stroke-linejoin="round" d="M12.200 10 14.800 13"/><rect fill="#3f7ce8" x="1.500" y="9.200" width="5.600" height="5.300" rx=".8"/></svg>
<svg class="i" style="left:796.30px;top:26.10px;" width="9" height="9" viewBox="0 0 16 16"><path fill="none" stroke="#b4b7bd" stroke-width="1.20" vector-effect="non-scaling-stroke" stroke-linecap="round" stroke-linejoin="round" d="M1.500 2.300h13M1.500 13.700h13"/><path fill="none" stroke="#3f7ce8" stroke-width="1.10" vector-effect="non-scaling-stroke" stroke-linecap="round" stroke-linejoin="round" d="M3.300 5.500h4M5.300 5.500v5.500M8.700 5.500h4M10.700 5.500v5.500"/></svg>
<svg class="i" style="left:814.10px;top:26.10px;" width="9" height="9" viewBox="0 0 16 16"><path fill="none" stroke="#b4b7bd" stroke-width="1.00" vector-effect="non-scaling-stroke" stroke-linecap="round" stroke-linejoin="round" d="M4.500 5.700 8 2.200l3.500 3.500M4.500 10.300 8 13.800l3.500-3.500"/></svg>
<svg class="i" style="left:827.90px;top:26.10px;" width="9" height="9" viewBox="0 0 16 16"><path fill="none" stroke="#b4b7bd" stroke-width="1.00" vector-effect="non-scaling-stroke" stroke-linecap="round" stroke-linejoin="round" d="M4.500 2 8 5.500 11.500 2M4.500 14 8 10.500l3.500 3.500"/></svg>
<svg class="i" style="left:845.60px;top:26.40px;" width="8.4" height="8.4" viewBox="0 0 16 16"><path fill="none" stroke="#9c9fa6" stroke-width="1.00" vector-effect="non-scaling-stroke" stroke-linecap="round" stroke-linejoin="round" d="M8 1.300 13.800 4.650v6.700L8 14.700 2.200 11.350V4.650z"/><circle fill="none" stroke="#9c9fa6" stroke-width="1.00" vector-effect="non-scaling-stroke" stroke-linecap="round" stroke-linejoin="round" cx="8" cy="8" r="2.300"/></svg>
<svg class="i" style="left:853.40px;top:33.60px" width="2.4" height="2.4" viewBox="0 0 4 4"><path fill="#b4b7bd" d="M4 0v4H0z"/></svg>
<svg class="i" style="left:674.60px;top:45.90px;" width="7" height="7" viewBox="0 0 16 16"><path fill="none" stroke="#9da0a8" stroke-width="1.00" vector-effect="non-scaling-stroke" stroke-linecap="round" stroke-linejoin="round" d="M3.5 6 8 10.5 12.5 6"/></svg>
<svg class="i" style="left:685.15px;top:44.55px;" width="9.5" height="9.5" viewBox="0 0 16 16"><path fill="none" stroke="#b4b7bd" stroke-width="0.95" vector-effect="non-scaling-stroke" stroke-linecap="round" stroke-linejoin="round" d="M1.200 13.500C1 9 3.500 6 7 5.600L10.500 5.300C11.500 5.200 12.200 4.700 12.500 3.700C12.900 2.400 14.600 2.200 15 3.400C15.400 4.600 14.700 5.600 13.900 6.200C13.100 6.800 12.800 8 12.800 9.500V13.500H10.700C10.700 12.400 10.100 11.800 9.300 11.800S7.900 12.400 7.900 13.500H5.900C5.900 12.400 5.300 11.800 4.500 11.800S3.100 12.400 3.100 13.500Z"/><path fill="none" stroke="#b4b7bd" stroke-width="0.80" vector-effect="non-scaling-stroke" stroke-linecap="round" stroke-linejoin="round" d="M6.200 8.300C7.200 9.700 9 9.800 10.200 8.700"/></svg>
<span id="t31" class="t " style="left:695.50px;top:44.80px;font-size:6.5px;color:#dadce1;line-height:12px;transform:scaleX(0.9678);">NeoForge-Tutorial-1.21.X</span>
<svg class="i" style="left:684.60px;top:59.00px;" width="7" height="7" viewBox="0 0 16 16"><path fill="none" stroke="#9da0a8" stroke-width="1.00" vector-effect="non-scaling-stroke" stroke-linecap="round" stroke-linejoin="round" d="M6 3.5 10.5 8 6 12.5"/></svg>
<svg class="i" style="left:695.30px;top:58.00px;" width="9" height="9" viewBox="0 0 16 16"><path fill="none" stroke="#b4b7bd" stroke-width="1.00" vector-effect="non-scaling-stroke" stroke-linecap="round" stroke-linejoin="round" style="fill:#3a3c41" d="M2 4.3a1.3 1.3 0 0 1 1.3-1.3h2.7l1.7 1.9h5a1.3 1.3 0 0 1 1.3 1.3v6a1.3 1.3 0 0 1-1.3 1.3H3.3a1.3 1.3 0 0 1-1.3-1.3z"/></svg>
<div class="b" style="left:700.10px;top:62.30px;width:4.3px;height:4.3px;background:#3569cf;border-radius:2.1px"></div>
<span id="t32" class="t " style="left:705.90px;top:57.90px;font-size:6.5px;color:#dadce1;line-height:12px;transform:scaleX(0.8962);">Tasks</span>
<svg class="i" style="left:684.60px;top:71.80px;" width="7" height="7" viewBox="0 0 16 16"><path fill="none" stroke="#9da0a8" stroke-width="1.00" vector-effect="non-scaling-stroke" stroke-linecap="round" stroke-linejoin="round" d="M6 3.5 10.5 8 6 12.5"/></svg>
<svg class="i" style="left:695.30px;top:70.80px;" width="9" height="9" viewBox="0 0 16 16"><path fill="none" stroke="#b4b7bd" stroke-width="1.00" vector-effect="non-scaling-stroke" stroke-linecap="round" stroke-linejoin="round" style="fill:#3a3c41" d="M2 4.3a1.3 1.3 0 0 1 1.3-1.3h2.7l1.7 1.9h5a1.3 1.3 0 0 1 1.3 1.3v6a1.3 1.3 0 0 1-1.3 1.3H3.3a1.3 1.3 0 0 1-1.3-1.3z"/></svg>
<div class="b" style="left:700.10px;top:75.10px;width:4.3px;height:4.3px;background:#3569cf;border-radius:0.8px"></div>
<span id="t33" class="t " style="left:705.90px;top:70.70px;font-size:6.5px;color:#dadce1;line-height:12px;transform:scaleX(0.9480);">Dependencies</span>
<svg class="i" style="left:1007.90px;top:3.40px;" width="12.4" height="12.4" viewBox="0 0 16 16"><path fill="none" stroke="#b4b7bd" stroke-width="1.00" vector-effect="non-scaling-stroke" stroke-linecap="round" stroke-linejoin="round" d="M3 11.500c1-1 1.300-2 1.300-4.500a3.700 3.700 0 0 1 7.400 0c0 2.500.3 3.500 1.300 4.500zM6.700 13.800h2.600"/></svg>
<svg class="i" style="left:1008.20px;top:25.20px;" width="12.2" height="12.2" viewBox="0 0 16 16"><path fill="none" stroke="#b4b7bd" stroke-width="1.00" vector-effect="non-scaling-stroke" stroke-linecap="round" stroke-linejoin="round" d="M5.500 11.500A4.800 4.800 0 1 1 11.300 5.500"/><path fill="none" stroke="#b4b7bd" stroke-width="1.00" vector-effect="non-scaling-stroke" stroke-linecap="round" stroke-linejoin="round" d="M5.800 8.500a2 2 0 0 1 2.500-2.200"/><path fill="none" stroke="#b4b7bd" stroke-width="1.00" vector-effect="non-scaling-stroke" stroke-linecap="round" stroke-linejoin="round" d="M8 8.500h6.500v4.500H13v1.500L11.300 13H8z"/></svg>
<svg class="i" style="left:1007.80px;top:46.20px;" width="12.2" height="12.2" viewBox="0 0 16 16"><ellipse fill="none" stroke="#b4b7bd" stroke-width="1.00" vector-effect="non-scaling-stroke" stroke-linecap="round" stroke-linejoin="round" cx="8" cy="3.800" rx="5" ry="1.800"/><path fill="none" stroke="#b4b7bd" stroke-width="1.00" vector-effect="non-scaling-stroke" stroke-linecap="round" stroke-linejoin="round" d="M3 3.800v8.400c0 1 2.200 1.800 5 1.800s5-.8 5-1.800V3.800M3 6.600c0 1 2.200 1.800 5 1.800s5-.8 5-1.800M3 9.400c0 1 2.200 1.800 5 1.800s5-.8 5-1.800"/></svg>
<div class="b" style="left:1005.90px;top:65.80px;width:16.00px;height:16.00px;background:#36383d;border-radius:3.2px;"></div>
<svg class="i" style="left:1008.00px;top:67.60px;" width="12" height="12" viewBox="0 0 16 16"><path fill="none" stroke="#c3c5cb" stroke-width="0.95" vector-effect="non-scaling-stroke" stroke-linecap="round" stroke-linejoin="round" d="M1.200 13.500C1 9 3.500 6 7 5.600L10.500 5.300C11.500 5.200 12.200 4.700 12.500 3.700C12.900 2.400 14.600 2.200 15 3.400C15.400 4.600 14.700 5.600 13.900 6.200C13.100 6.800 12.800 8 12.800 9.500V13.500H10.700C10.700 12.400 10.100 11.800 9.300 11.800S7.900 12.400 7.900 13.500H5.900C5.900 12.400 5.300 11.800 4.500 11.800S3.100 12.400 3.100 13.500Z"/><path fill="none" stroke="#c3c5cb" stroke-width="0.80" vector-effect="non-scaling-stroke" stroke-linecap="round" stroke-linejoin="round" d="M6.200 8.300C7.200 9.700 9 9.800 10.200 8.700"/></svg>
</body></html>
